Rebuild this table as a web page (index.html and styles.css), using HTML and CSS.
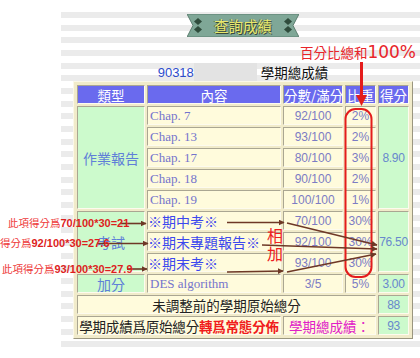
FILE: index.html
```html
<!DOCTYPE html>
<html lang="zh-Hant">
<head>
<meta charset="utf-8">
<title>查詢成績</title>
<link rel="stylesheet" href="styles.css">
</head>
<body>
<div class="frame">
  <div class="col">
    <div class="banner">
      <svg class="banner-bg" width="112" height="23" viewBox="0 0 112 23">
        <polygon points="0,0 112,0 106,11.5 112,23 0,23 6,11.5" fill="#7fa797" stroke="#5d7f70" stroke-width="1"/>
        <polygon points="11,4 15,7.5 11,11 7,7.5" fill="#2f4c3c"/>
        <polygon points="11,12 15,15.5 11,19 7,15.5" fill="#2f4c3c"/>
        <polygon points="101,4 105,7.5 101,11 97,7.5" fill="#2f4c3c"/>
        <polygon points="101,12 105,15.5 101,19 97,15.5" fill="#2f4c3c"/>
      </svg>
      <span class="banner-text">查詢成績</span>
    </div>
    <div class="note-row"><span class="note">百分比總和<span class="pct">100%</span></span></div>
    <div class="student"><span class="sid">90318</span><span class="name-box"></span><span class="stitle">學期總成績</span></div>
    <table class="grades">
      <colgroup><col class="c1"><col class="c2"><col class="c3"><col class="c4"><col class="c5"></colgroup>
      <tr class="head"><th>類型</th><th>內容</th><th>分數/滿分</th><th>比重</th><th>得分</th></tr>
      <tr><td class="type" rowspan="5">作業報告</td><td class="item">Chap. 7</td><td class="num">92/100</td><td class="num">2%</td><td class="score" rowspan="5">8.90</td></tr>
      <tr><td class="item">Chap. 13</td><td class="num">93/100</td><td class="num">2%</td></tr>
      <tr><td class="item">Chap. 17</td><td class="num">80/100</td><td class="num">3%</td></tr>
      <tr><td class="item">Chap. 18</td><td class="num">90/100</td><td class="num">2%</td></tr>
      <tr><td class="item">Chap. 19</td><td class="num">100/100</td><td class="num">1%</td></tr>
      <tr><td class="type" rowspan="3">考試</td><td class="exam">※期中考※</td><td class="num">70/100</td><td class="num">30%</td><td class="score" rowspan="3">76.50</td></tr>
      <tr><td class="exam">※期末專題報告※</td><td class="num">92/100</td><td class="num">30%</td></tr>
      <tr><td class="exam">※期末考※</td><td class="num">93/100</td><td class="num">30%</td></tr>
      <tr><td class="type">加分</td><td class="item">DES algorithm</td><td class="num">3/5</td><td class="num">5%</td><td class="score">3.00</td></tr>
      <tr><td class="raw" colspan="4">未調整前的學期原始總分</td><td class="score">88</td></tr>
      <tr><td class="final" colspan="2">學期成績爲原始總分<span class="hl">轉爲常態分佈</span></td><td class="final-label" colspan="2">學期總成績：</td><td class="score">93</td></tr>
    </table>
  </div>
</div>

<svg class="overlay" width="420" height="358" viewBox="0 0 420 358">
  <defs>
    <marker id="bh" viewBox="0 0 10 10" refX="9" refY="5" markerWidth="6" markerHeight="6" orient="auto" markerUnits="userSpaceOnUse">
      <path d="M0,0 L10,5 L0,10 z" fill="#6e3826"/>
    </marker>
  </defs>
  <rect x="345.5" y="109" width="26" height="168" rx="10" ry="10" fill="none" stroke="#e41c1c" stroke-width="2"/>
  <line x1="361.5" y1="62" x2="361.5" y2="97" stroke="#e41c1c" stroke-width="3"/>
  <polygon points="356,95 367,95 361.5,106" fill="#e41c1c"/>
  <g stroke="#6e3826" stroke-width="1.6" fill="none">
    <line x1="120" y1="223.5" x2="146" y2="223.5" marker-end="url(#bh)"/>
    <line x1="97" y1="243.5" x2="148" y2="243.5" marker-end="url(#bh)"/>
    <line x1="127" y1="269" x2="147" y2="269" marker-end="url(#bh)"/>
    <line x1="227" y1="222.5" x2="284" y2="222.5" marker-end="url(#bh)"/>
    <line x1="287" y1="223" x2="377" y2="245" marker-end="url(#bh)"/>
    <line x1="262" y1="245" x2="377" y2="249" marker-end="url(#bh)"/>
    <line x1="227" y1="272" x2="283" y2="271" marker-end="url(#bh)"/>
    <line x1="287" y1="272" x2="376" y2="254" marker-end="url(#bh)"/>
  </g>
</svg>
<div class="ann a1">此項得分爲<b>70/100*30=21</b></div>
<div class="ann a2">此項得分爲<b>92/100*30=27.6</b></div>
<div class="ann a3">此項得分爲<b>93/100*30=27.9</b></div>
<div class="sum">相<br>加</div>
</body>
</html>
```
FILE: styles.css
```css
* { box-sizing: border-box; }
html, body { margin: 0; padding: 0; background: #fff; }
body {
  width: 420px; height: 358px; overflow: hidden; position: relative;
  font-family: "Noto Sans CJK TC", "Noto Sans CJK SC", sans-serif;
}
.frame {
  margin: 12px 0 0 61px;
  height: 342px;
  padding-left: 12px;
  background: repeating-linear-gradient(to bottom, #ebebeb 0, #ebebeb 6px, #fff 6px, #fff 12.67px);
}
.col { width: 340px; display: flex; flex-direction: column; }

.banner {
  align-self: center; margin-top: 2px; width: 112px; height: 23px;
  display: grid; place-items: center;
}
.banner > * { grid-area: 1 / 1; }
.banner-text {
  font-size: 14.5px; line-height: 23px; color: #e8e86c;
  text-shadow: 1px 1px 0 #3a4a3a, -1px 0 0 #5a6a50;
}

.note-row { display: flex; justify-content: flex-end; margin-right: -3px; margin-top: 5px; height: 21px; align-items: center; }
.note { color: #e8242a; font-size: 13.5px; line-height: 21px; white-space: nowrap; }
.pct { font-family: "DejaVu Sans", sans-serif; font-size: 17px; }

.student { display: flex; justify-content: center; align-items: center; height: 18px; }
.sid { font-family: "Liberation Sans", sans-serif; font-size: 13px; color: #2d4ccc; }
.name-box { width: 63px; height: 19px; background: #e3e3e3; }
.stitle { margin-left: 4px; font-size: 13.5px; color: #111; }

.grades {
  border-collapse: separate; border-spacing: 2px; padding: 1px;
  width: 340px; table-layout: fixed;
  background: #f1ebca;
  border: 1px solid; border-color: #fbf8e8 #9a9680 #9a9680 #fbf8e8;
}
.c1 { width: 68px; } .c2 { width: 134px; } .c3 { width: 60px; } .c4 { width: 31px; } .c5 { width: 31px; }
.grades th, .grades td {
  height: 19px; padding: 0; line-height: 16px; text-align: center; white-space: nowrap; overflow: visible;
  border: 1px solid; border-color: #aaa692 #fdfbee #fdfbee #aaa692;
}
.grades th { background: #6a6aee; color: #fff; font-weight: normal; font-size: 13.5px; }
.type { background: #ccfacc; color: #5f7fd8; font-size: 14px; }
.item { background: #fffbdc; color: #7474cc; font-family: "Liberation Serif", serif; font-size: 13px; text-align: left !important; padding-left: 2px !important; }
.num { background: #fffbdc; color: #7c7cc4; font-family: "Liberation Sans", sans-serif; font-size: 12px; }
.score { background: #ccfacc; color: #6888cc; font-family: "Liberation Sans", sans-serif; font-size: 12px; letter-spacing: -0.3px; }
.exam { background: #fffbdc; color: #3c48ee; font-size: 14px; text-align: left !important; }
.raw { background: #fffbdc; color: #222; font-size: 13.5px; }
.final { background: #fffbdc; color: #222; font-size: 13.5px; letter-spacing: -0.2px; }
.hl { color: #f01c1c; font-weight: bold; }
.final-label { background: #fffbdc; color: #e020c8; font-size: 13.5px; }

.overlay { position: absolute; left: 0; top: 0; pointer-events: none; }
.ann {
  position: absolute; white-space: nowrap; font-size: 10.5px; line-height: 14px; color: #ee3a3a;
}
.ann b { font-family: "Liberation Sans", sans-serif; font-size: 11px; color: #dd1e1e; }
.a1 { left: 8px; top: 216px; }
.a2 { left: -21px; top: 236px; }
.a3 { left: 2px; top: 262px; }
.sum { position: absolute; left: 267px; top: 226px; font-size: 16px; line-height: 18px; color: #ee2020; }
```
